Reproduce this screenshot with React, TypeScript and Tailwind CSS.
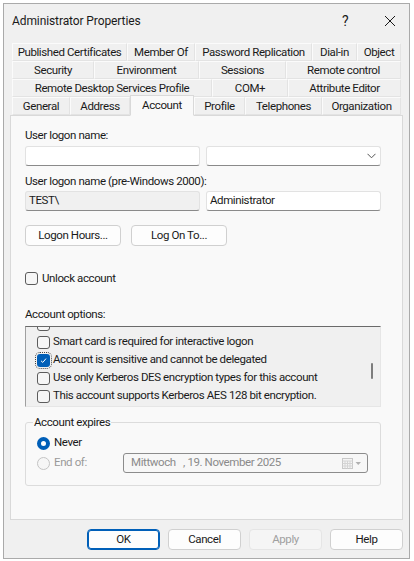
import type { ReactNode } from 'react'

const tabRows: { label: string; w: number; active?: boolean }[][] = [
  [
    { label: 'Published Certificates', w: 115 },
    { label: 'Member Of', w: 68 },
    { label: 'Password Replication', w: 117 },
    { label: 'Dial-in', w: 45 },
    { label: 'Object', w: 44 },
  ],
  [
    { label: 'Security', w: 82 },
    { label: 'Environment', w: 105 },
    { label: 'Sessions', w: 87 },
    { label: 'Remote control', w: 115 },
  ],
  [
    { label: 'Remote Desktop Services Profile', w: 200 },
    { label: 'COM+', w: 76 },
    { label: 'Attribute Editor', w: 113 },
  ],
  [
    { label: 'General', w: 58 },
    { label: 'Address', w: 60 },
    { label: 'Account', w: 64, active: true },
    { label: 'Profile', w: 51 },
    { label: 'Telephones', w: 77 },
    { label: 'Organization', w: 79 },
  ],
]

// first row is scrolled out of view, only the bottom of its box peeks in
const options = [
  { label: '', checked: false },
  { label: 'Smart card is required for interactive logon', checked: false },
  { label: 'Account is sensitive and cannot be delegated', checked: true },
  { label: 'Use only Kerberos DES encryption types for this account', checked: false },
  { label: 'This account supports Kerberos AES 128 bit encryption.', checked: false },
  { label: 'This account supports Kerberos AES 256 bit encryption.', checked: false },
]

function CheckBox({ checked = false, focused = false }: { checked?: boolean; focused?: boolean }) {
  return (
    <span
      className={
        'flex h-[13px] w-[13px] shrink-0 items-center justify-center rounded-[3px] ' +
        (checked ? 'bg-[#005fb8] ' : 'border border-[#5c5c5c] bg-[#f6f6f6] ') +
        (focused ? 'outline outline-1 outline-dotted outline-[#444] outline-offset-[1px]' : '')
      }
    >
      {checked && (
        <svg width="9" height="9" viewBox="0 0 9 9" fill="none">
          <path d="M2 4.8 L3.8 6.4 L7 2.6" stroke="white" strokeWidth="1" />
        </svg>
      )}
    </span>
  )
}

function Button({ children, w, primary, disabled }: { children: ReactNode; w: string; primary?: boolean; disabled?: boolean }) {
  return (
    <button
      type="button"
      className={
        'flex h-[21px] items-center justify-center rounded-[4px] border ' +
        w +
        ' ' +
        (primary
          ? 'border-[#005fb8] bg-[#fdfdfd] text-[#1a1a1a] shadow-[inset_0_0_0_1px_#005fb8]'
          : disabled
            ? 'border-[#e5e5e5] bg-[#f5f5f5] text-[#a0a0a0]'
            : 'border-[#d0d0d0] bg-[#fdfdfd] text-[#1a1a1a]')
      }
    >
      {children}
    </button>
  )
}

function Field({ value = '', readOnly, children }: { value?: string; readOnly?: boolean; children?: ReactNode }) {
  return (
    <div
      className={
        'flex h-[20px] w-[175px] items-center justify-between rounded-[3px] border border-[#e2e2e2] border-b-[#8a8a8a] pl-[3px] pr-[4px] text-[#1a1a1a] ' +
        (readOnly ? 'bg-[#f0f0f0]' : 'bg-white')
      }
    >
      <span>{value}</span>
      {children}
    </div>
  )
}

export default function App() {
  return (
    <div className="relative h-[561px] w-[414px] overflow-hidden bg-white font-['Roboto',sans-serif] text-[11.5px] tracking-[-0.4px] text-[#1a1a1a]">
      <div className="ml-[3px] mt-[3px] flex h-[556px] w-[407px] flex-col border border-[#aaaaaa] bg-[#f0f0f0]">
        {/* Title bar */}
        <div className="flex h-[34px] shrink-0 items-center pl-[8px] text-[12px] tracking-[-0.1px]">
          <span className="flex-1">Administrator Properties</span>
          <span className="w-[42px] text-[14px]">?</span>
          <span className="flex w-[25px] items-center">
            <svg width="12" height="12" viewBox="0 0 12 12" fill="none">
              <path d="M1 1 L11 11 M11 1 L1 11" stroke="#1a1a1a" strokeWidth="1" />
            </svg>
          </span>
        </div>

        <div className="flex flex-col px-[6px] pt-[5px]">
          {/* Tabs */}
          <div className="flex flex-col pl-[2px]">
            {tabRows.map((row, i) => (
              <div key={i} className="flex h-[18px] items-end">
                {row.map(t => (
                  <div
                    key={t.label}
                    style={{ width: t.w }}
                    className={
                      'flex shrink-0 items-center justify-center whitespace-nowrap border pt-[1px] ' +
                      (t.active
                        ? 'relative z-10 -mb-[1px] h-[21px] border-[#d9d9d9] border-b-[#f9f9f9] bg-[#f9f9f9]'
                        : 'h-[18px] border-[#e3e3e3] border-l-[#fbfbfb] border-t-[#fbfbfb] bg-[#f0f0f0]')
                    }
                  >
                    {t.label}
                  </div>
                ))}
              </div>
            ))}
          </div>

          {/* Page */}
          <div className="flex h-[405px] w-[393px] flex-col border border-[#d9d9d9] bg-[#f9f9f9] pl-[14px] pt-[12px]">
            <div className="h-[15px] leading-[15px]">User logon name:</div>
            <div className="mt-[3px] flex gap-[6px]">
              <Field />
              <Field>
                <svg width="9" height="6" viewBox="0 0 9 6" fill="none">
                  <path d="M0.5 0.8 L4.5 4.8 L8.5 0.8" stroke="#555" strokeWidth="1" />
                </svg>
              </Field>
            </div>

            <div className="mt-[8px] h-[15px] leading-[15px]">User logon name (pre-Windows 2000):</div>
            <div className="mt-[2px] flex gap-[6px]">
              <Field value="TEST\" readOnly />
              <Field value="Administrator" />
            </div>

            <div className="mt-[14px] flex gap-[10px]">
              <Button w="w-[96px]">Logon Hours...</Button>
              <Button w="w-[96px]">Log On To...</Button>
            </div>

            <label className="mt-[25px] flex h-[15px] items-center gap-[4px]">
              <CheckBox />
              <span>Unlock account</span>
            </label>

            <div className="mt-[21px] h-[15px] leading-[15px]">Account options:</div>
            <div className="mt-[4px] flex h-[81px] w-[356px] border border-[#a0a0a0] border-b-[#e6e6e6] border-r-[#e6e6e6] border-t-[#6a6a6a] bg-[#f0f0f0]">
              <div className="flex-1 overflow-hidden">
                <div className="-mt-[12px] flex flex-col pl-[11px]">
                  {options.map((o, i) => (
                    <div key={i} className="flex h-[18px] items-center gap-[3px] whitespace-nowrap">
                      <CheckBox checked={o.checked} focused={o.checked} />
                      {o.label && <span>{o.label}</span>}
                    </div>
                  ))}
                </div>
              </div>
              <div className="flex w-[17px] flex-col items-center pt-[36px]">
                <div className="ml-[1px] h-[16px] w-[2px] rounded-full bg-[#7d7d7d]" />
              </div>
            </div>

            <fieldset className="mt-[8px] h-[71px] w-[356px] rounded-[3px] border border-[#dcdcdc]">
              <legend className="ml-[7px] px-[1px] leading-[15px]">Account expires</legend>
              <div className="flex flex-col pl-[11px] pt-[4px]">
                <div className="flex h-[18px] items-center gap-[4px]">
                  <span className="h-[13px] w-[13px] rounded-full border-[4px] border-[#005fb8] bg-white" />
                  <span>Never</span>
                </div>
                <div className="flex h-[22px] items-center">
                  <div className="flex w-[86px] items-center gap-[4px] text-[#9a9a9a]">
                    <span className="h-[13px] w-[13px] rounded-full border border-[#c4c4c4] bg-[#f6f6f6]" />
                    <span>End of:</span>
                  </div>
                  <div className="flex h-[20px] w-[245px] items-center rounded-[3px] border border-[#8c8c8c] bg-[#f7f7f7] pl-[7px] pr-[5px] text-[#8a8a8a]">
                    <span className="flex-1 whitespace-pre">Mittwoch   , 19. November 2025</span>
                    <svg width="20" height="11" viewBox="0 0 20 11" fill="none">
                      <rect x="0.5" y="0.5" width="10" height="10" fill="#f4f4f4" stroke="#c8c8c8" />
                      <path d="M0.5 3 H10.5 M0.5 5.5 H10.5 M0.5 8 H10.5 M3 3 V10.5 M5.5 3 V10.5 M8 3 V10.5" stroke="#d4d4d4" />
                      <path d="M13.5 4 L19 4 L16.25 7 Z" fill="#b0b0b0" />
                    </svg>
                  </div>
                </div>
              </div>
            </fieldset>
          </div>

          {/* Dialog buttons */}
          <div className="mt-[9px] flex justify-end gap-[8px]">
            <Button w="w-[73px]" primary>OK</Button>
            <Button w="w-[73px]">Cancel</Button>
            <Button w="w-[73px]" disabled>Apply</Button>
            <Button w="w-[73px]">Help</Button>
          </div>
        </div>
      </div>
    </div>
  )
}
